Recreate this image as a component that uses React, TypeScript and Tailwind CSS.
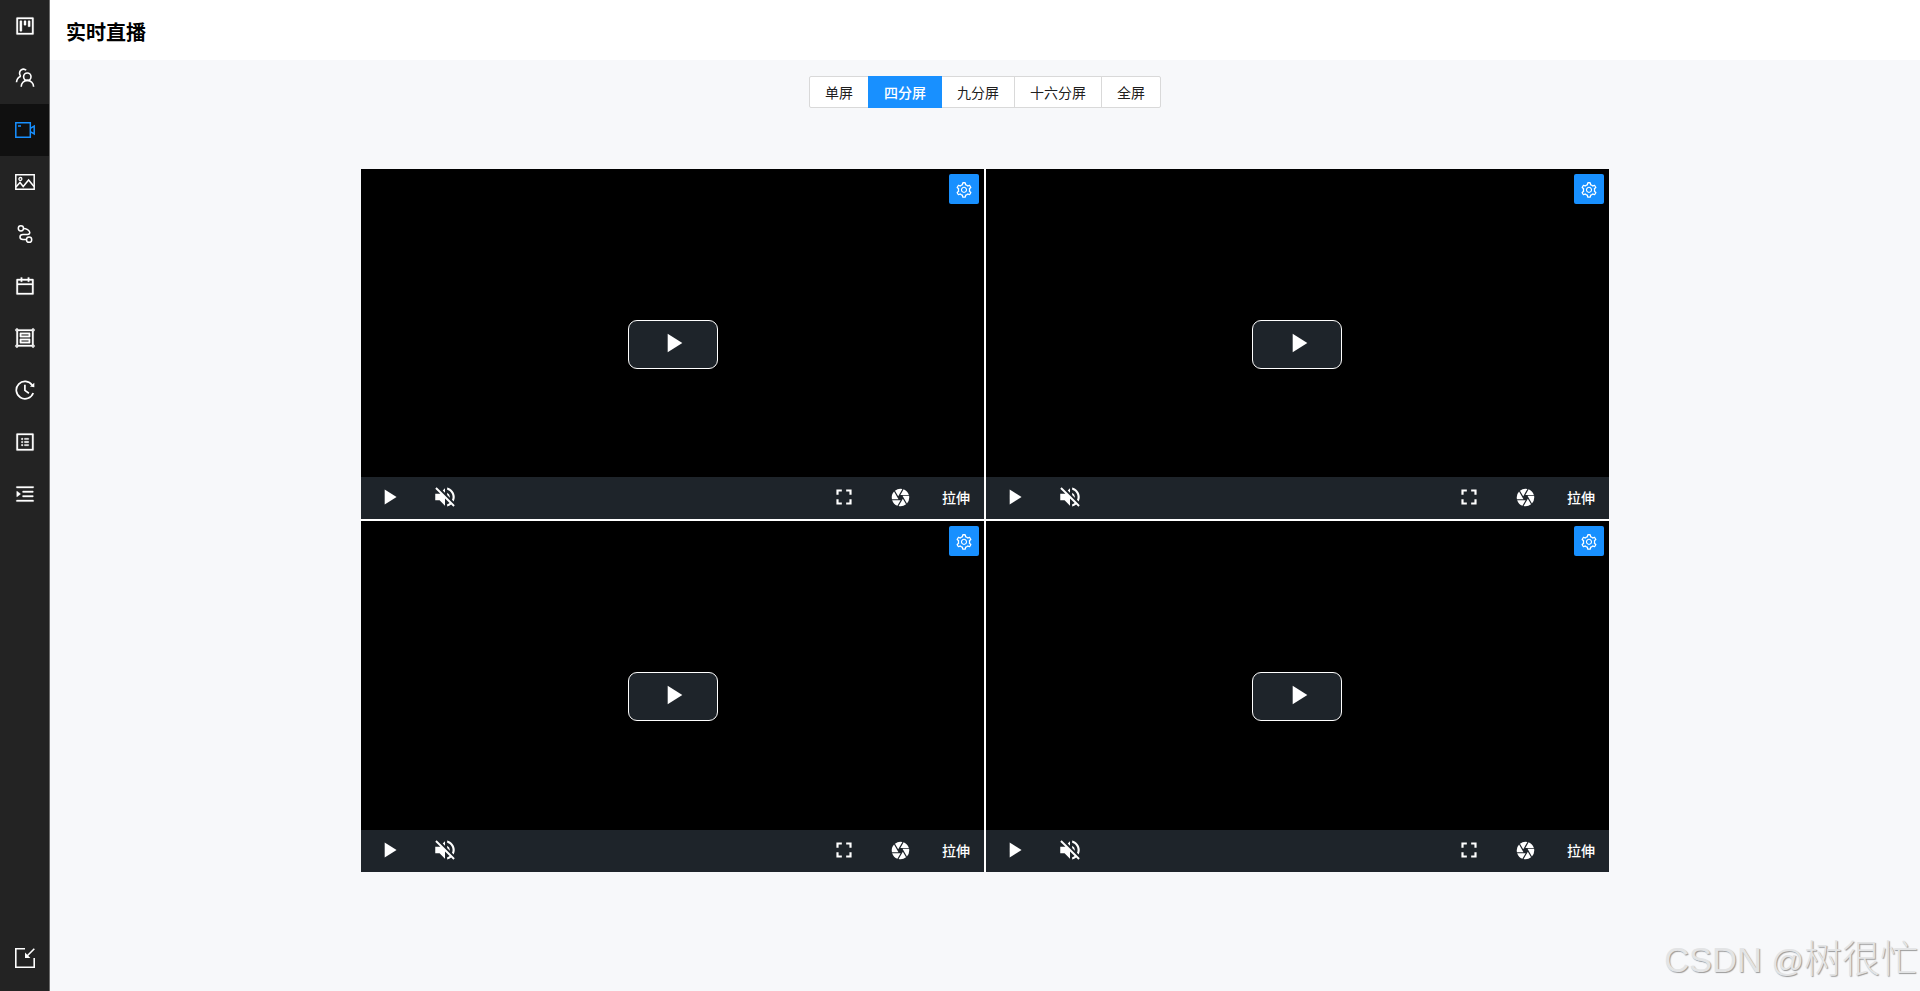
import { useState } from "react"
import {
  AiOutlineProject,
  AiOutlineCalendar,
  AiOutlineGroup,
  AiOutlineProfile,
  AiOutlineMenuUnfold,
  AiOutlineSetting,
} from "react-icons/ai"
import { MdPlayArrow, MdVolumeOff, MdFullscreen, MdCamera } from "react-icons/md"

function PeopleIcon() {
  return (
    <svg viewBox="0 0 20 20" className="w-5 h-5" fill="none" stroke="currentColor" strokeWidth="1.6">
      <circle cx="12.3" cy="8.7" r="3.7" />
      <path d="M6.2 18.7c0-3.6 2.6-6.3 6.1-6.3s6.3 2.7 6.3 6.3" />
      <path d="M11.2 2.3C9.8.9 7.500.9 5.900 2.200 4.200 3.700 4.100 6.300 5.700 8M5.900 8.300C3.300 9.300 1.700 11.500 1.500 14.300" />
    </svg>
  )
}

function VideoIcon() {
  return (
    <svg viewBox="0 0 20 20" className="w-5 h-5" fill="none" stroke="currentColor" strokeWidth="1.500">
      <path d="M.8 2.700h14.500v14.500H.8z" />
      <path d="M3 6h3" />
      <path d="M15.300 8.300l3.900-2.300v8l-3.900-2.300" />
    </svg>
  )
}

function PictureIcon() {
  return (
    <svg viewBox="0 0 20 20" className="w-5 h-5" fill="none" stroke="currentColor" strokeWidth="1.500">
      <path d="M.8 2.700h18.400v14.600H.8z" />
      <circle cx="5.400" cy="7" r="1.500" strokeWidth="1.300" />
      <path d="M1 15l4-4.500 3.200 4L13.600 8l5.400 6.500" />
    </svg>
  )
}

function TrackIcon() {
  return (
    <svg viewBox="0 0 20 20" className="w-5 h-5" fill="none" stroke="currentColor" strokeWidth="1.500">
      <circle cx="5.900" cy="4.300" r="2.600" />
      <circle cx="14.100" cy="15.700" r="2.600" />
      <path d="M8.500 4.400c2.500 0 6.300 2 6.300 4.200 0 1-.8 1.800-2.300 1.800H8c-2 0-3 1.100-3 2.500s1.200 2.500 3 2.500h3.500" />
    </svg>
  )
}

function HistoryIcon() {
  return (
    <svg viewBox="0 0 20 20" className="w-5 h-5" fill="none" stroke="currentColor" strokeWidth="1.700">
      <path d="M17.200 5.200A8.700 8.700 0 1 0 18.200 13" />
      <path d="M9.900 4.800v5.600l4 2.900" />
      <path d="M19.300 2.800v4.400l-4.400-.8z" fill="currentColor" stroke="none" />
    </svg>
  )
}

function ExitIcon() {
  return (
    <svg viewBox="0 0 20 20" className="w-5 h-5" fill="none" stroke="currentColor" strokeWidth="1.6">
      <path d="M10 .8H.8v18.400h18.400V10" />
      <path d="M19.300.7l-7 7" />
      <path d="M10 4.600V10h5.400z" fill="currentColor" stroke="none" />
    </svg>
  )
}

const menus = [
  { key: "board", icon: <AiOutlineProject strokeWidth={16} /> },
  { key: "people", icon: <PeopleIcon /> },
  { key: "live", icon: <VideoIcon /> },
  { key: "picture", icon: <PictureIcon /> },
  { key: "track", icon: <TrackIcon /> },
  { key: "calendar", icon: <AiOutlineCalendar strokeWidth={16} /> },
  { key: "group", icon: <AiOutlineGroup strokeWidth={16} /> },
  { key: "history", icon: <HistoryIcon /> },
  { key: "profile", icon: <AiOutlineProfile strokeWidth={16} /> },
  { key: "menu", icon: <AiOutlineMenuUnfold strokeWidth={16} /> },
]

const layouts = ["单屏", "四分屏", "九分屏", "十六分屏", "全屏"]

function Player() {
  return (
    <div className="group relative flex flex-col bg-black text-white">
      <button className="absolute top-[5px] right-[5px] w-[30px] h-[30px] flex items-center justify-center rounded-xs bg-[#1890ff] pt-0.5">
        <AiOutlineSetting className="w-[18px] h-[18px]" />
      </button>
      <button className="absolute left-[267px] group-even:left-[266px] top-[151px] w-[90px] h-[49px] flex items-center justify-center rounded-[9px] border border-white bg-[#1e242a] pb-[3px] group-even:pl-px">
        <MdPlayArrow className="w-8 h-8" />
      </button>
      <div className="mt-auto h-[42px] flex items-center bg-[#1e242a] pb-0.5">
        <button className="w-14 flex justify-center"><MdPlayArrow className="w-[26px] h-[26px]" /></button>
        <button className="w-14 flex justify-center"><MdVolumeOff className="w-[26px] h-[26px]" /></button>
        <button className="ml-auto w-14 flex justify-center"><MdFullscreen className="w-[26px] h-[26px]" /></button>
        <button className="w-14 flex justify-center"><MdCamera className="w-[21px] h-[21px]" /></button>
        <button className="w-14 text-sm font-medium pb-px">拉伸</button>
      </div>
    </div>
  )
}

export default function App() {
  const [active, setActive] = useState("live")
  const [layout, setLayout] = useState("四分屏")

  return (
    <div className="relative flex h-screen overflow-hidden bg-[#f7f8fa] font-['Noto_Sans_CJK_SC','Liberation_Sans',sans-serif]">
      <aside className="w-[50px] shrink-0 flex flex-col bg-[#232323] border-r border-[#6b6b6b] text-white text-[22px]">
        {menus.map((m) => (
          <button key={m.key} onClick={() => setActive(m.key)}
            className={`h-[52px] pl-px flex items-center justify-center ${active === m.key ? "bg-[#101010] text-[#1890ff]" : ""}`}>
            {m.icon}
          </button>
        ))}
        <button className="mt-auto mb-[7px] h-[52px] pl-px flex items-center justify-center">
          <ExitIcon />
        </button>
      </aside>

      <main className="flex-1 flex flex-col">
        <header className="h-15 px-4 flex items-center bg-white">
          <h1 className="text-xl font-bold text-black pt-1">实时直播</h1>
        </header>

        <div className="mt-4 flex justify-center">
          {layouts.map((name) => (
            <button key={name} onClick={() => setLayout(name)}
              className={`h-8 px-[15px] border text-sm -ml-px first:ml-0 first:rounded-l-xs last:rounded-r-xs ${
                layout === name ? "relative bg-[#1890ff] border-[#1890ff] text-white font-medium" : "bg-white border-[#d9d9d9] text-black/90"
              }`}>
              {name}
            </button>
          ))}
        </div>

        <div className="mt-[61px] mx-auto w-[1248px] grid grid-cols-2 grid-rows-[350px_351px] gap-0.5 bg-white">
          {[1, 2, 3, 4].map((n) => <Player key={n} />)}
        </div>
      </main>

      <div className="absolute right-0.5 bottom-[3px] text-[38px] leading-[54px] font-light text-[#e3e4e5] whitespace-nowrap font-['Liberation_Sans','Noto_Sans_CJK_SC',sans-serif] [text-shadow:1px_1px_1px_#999]">
        <span className="text-[34.5px]">CSDN </span>
        <span className="text-[32px]">@</span>树很忙
      </div>
    </div>
  )
}
